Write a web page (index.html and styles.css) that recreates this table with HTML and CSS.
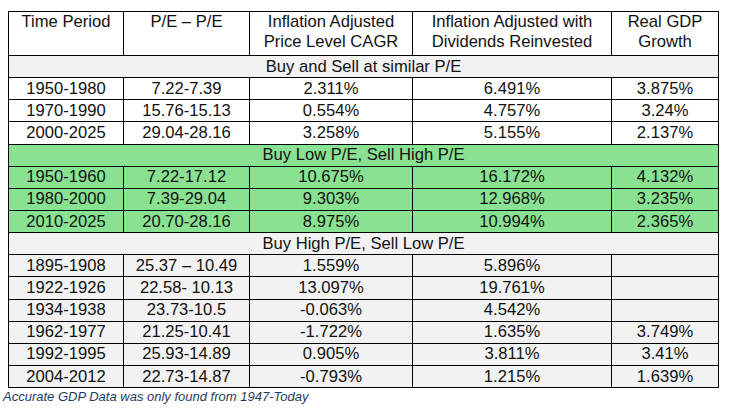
FILE: index.html
```html
<!DOCTYPE html>
<html>
<head>
<meta charset="utf-8">
<link rel="stylesheet" href="styles.css">
</head>
<body>
<div class="page">
<table class="grid">
<colgroup>
<col class="c1"><col class="c2"><col class="c3"><col class="c4"><col class="c5">
</colgroup>
<thead>
<tr class="head">
<th>Time Period</th>
<th>P/E – P/E</th>
<th>Inflation Adjusted<br>Price Level CAGR</th>
<th>Inflation Adjusted with<br>Dividends Reinvested</th>
<th>Real GDP<br>Growth</th>
</tr>
</thead>
<tbody>
<tr class="section gray"><td colspan="5">Buy and Sell at similar P/E</td></tr>
<tr><td>1950-1980</td><td>7.22-7.39</td><td>2.311%</td><td>6.491%</td><td>3.875%</td></tr>
<tr><td>1970-1990</td><td>15.76-15.13</td><td>0.554%</td><td>4.757%</td><td>3.24%</td></tr>
<tr><td>2000-2025</td><td>29.04-28.16</td><td>3.258%</td><td>5.155%</td><td>2.137%</td></tr>
<tr class="section green"><td colspan="5">Buy Low P/E, Sell High P/E</td></tr>
<tr class="green"><td>1950-1960</td><td>7.22-17.12</td><td>10.675%</td><td>16.172%</td><td>4.132%</td></tr>
<tr class="green"><td>1980-2000</td><td>7.39-29.04</td><td>9.303%</td><td>12.968%</td><td>3.235%</td></tr>
<tr class="green"><td>2010-2025</td><td>20.70-28.16</td><td>8.975%</td><td>10.994%</td><td>2.365%</td></tr>
<tr class="section gray"><td colspan="5">Buy High P/E, Sell Low P/E</td></tr>
<tr class="gray"><td>1895-1908</td><td>25.37 – 10.49</td><td>1.559%</td><td>5.896%</td><td></td></tr>
<tr class="gray"><td>1922-1926</td><td>22.58- 10.13</td><td>13.097%</td><td>19.761%</td><td></td></tr>
<tr class="gray"><td>1934-1938</td><td>23.73-10.5</td><td>-0.063%</td><td>4.542%</td><td></td></tr>
<tr class="gray"><td>1962-1977</td><td>21.25-10.41</td><td>-1.722%</td><td>1.635%</td><td>3.749%</td></tr>
<tr class="gray"><td>1992-1995</td><td>25.93-14.89</td><td>0.905%</td><td>3.811%</td><td>3.41%</td></tr>
<tr class="gray"><td>2004-2012</td><td>22.73-14.87</td><td>-0.793%</td><td>1.215%</td><td>1.639%</td></tr>
</tbody>
</table>
<p class="note">Accurate GDP Data was only found from 1947-Today</p>
</div>
</body>
</html>
```

FILE: styles.css
```css
html, body {
  margin: 0;
  padding: 0;
  background: #ffffff;
}
.page {
  padding: 11px 0 0 3px;
  font-family: "Liberation Sans", Arial, sans-serif;
  color: #111111;
}
.grid {
  margin-left: 5px;
  border-collapse: collapse;
  table-layout: fixed;
  width: 710px;
  font-size: 16.6px;
}
.c1 { width: 115px; }
.c2 { width: 126px; }
.c3 { width: 163px; }
.c4 { width: 199px; }
.c5 { width: 107px; }
.grid th, .grid td {
  border: 1px solid #000000;
  padding: 0 2px;
  text-align: center;
  font-weight: normal;
  line-height: 20px;
  white-space: nowrap;
  overflow: hidden;
}
.grid th {
  vertical-align: top;
  height: 43px;
  padding-top: 0;
}
.grid td {
  height: 21.15px;
  vertical-align: middle;
}
.section td {
  padding: 0;
}
.gray td {
  background: #f2f2f2;
}
.green td {
  background: #88e291;
}
.note {
  margin: 1px 0 0 0;
  font-size: 13px;
  font-style: italic;
  color: #1f3a60;
  line-height: 15px;
}
```
